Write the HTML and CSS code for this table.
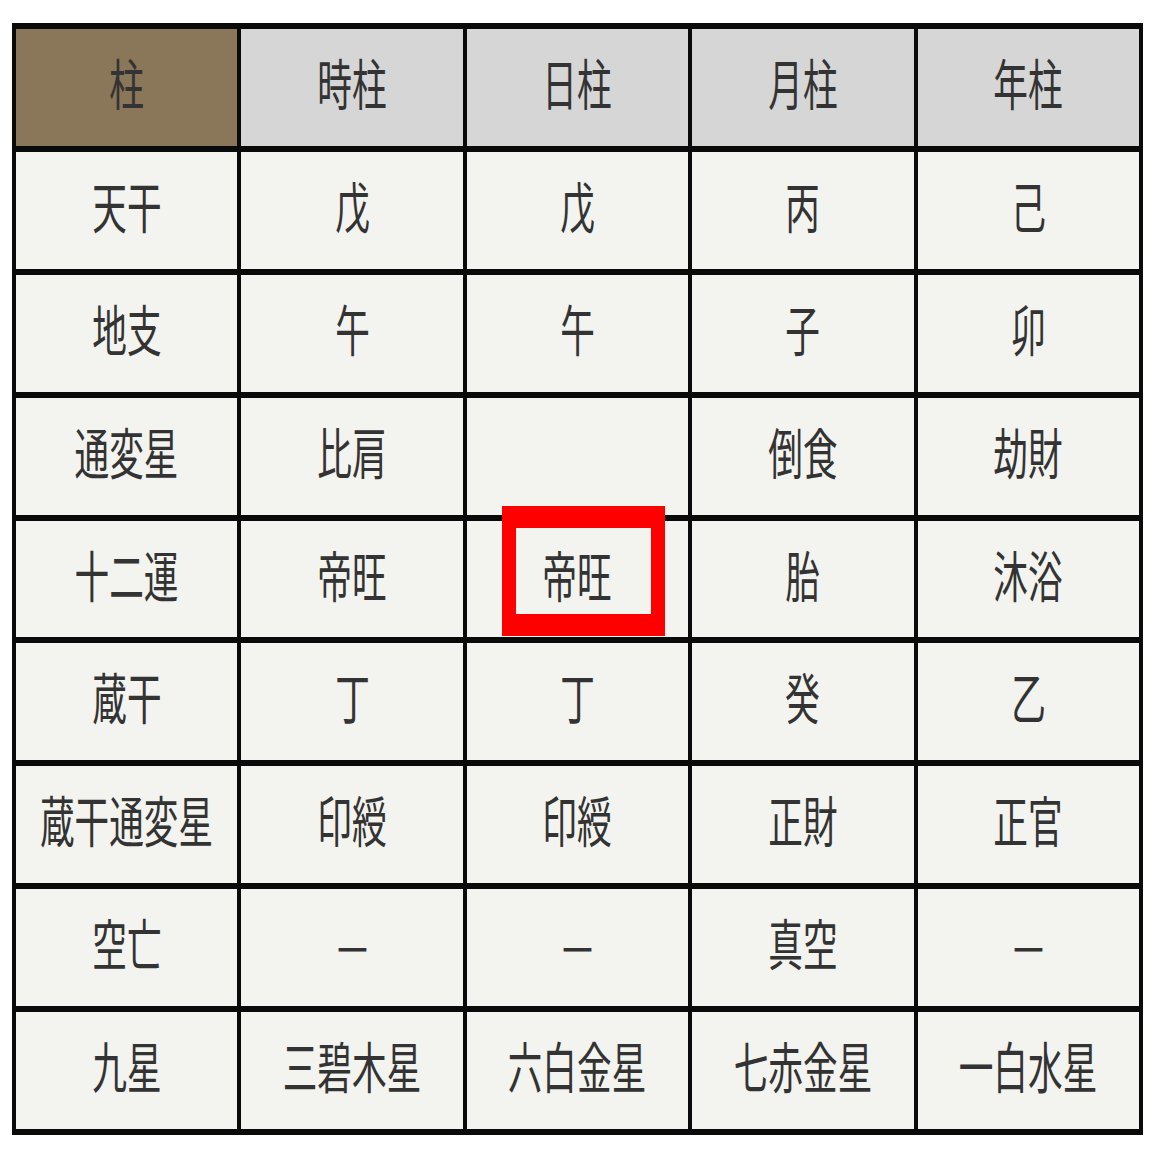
FILE: index.html
```html
<!DOCTYPE html>
<html lang="ja">
<head>
<meta charset="utf-8">
<title>命式</title>
<link rel="stylesheet" href="styles.css">
</head>
<body>
<div class="chart">
  <div class="cell head head-main"><span class="t">柱</span></div>
  <div class="cell head"><span class="t">時柱</span></div>
  <div class="cell head"><span class="t">日柱</span></div>
  <div class="cell head"><span class="t">月柱</span></div>
  <div class="cell head"><span class="t">年柱</span></div>

  <div class="cell"><span class="t">天干</span></div>
  <div class="cell"><span class="t">戊</span></div>
  <div class="cell"><span class="t">戊</span></div>
  <div class="cell"><span class="t">丙</span></div>
  <div class="cell"><span class="t">己</span></div>

  <div class="cell"><span class="t">地支</span></div>
  <div class="cell"><span class="t">午</span></div>
  <div class="cell"><span class="t">午</span></div>
  <div class="cell"><span class="t">子</span></div>
  <div class="cell"><span class="t">卯</span></div>

  <div class="cell"><span class="t">通変星</span></div>
  <div class="cell"><span class="t">比肩</span></div>
  <div class="cell"></div>
  <div class="cell"><span class="t">倒食</span></div>
  <div class="cell"><span class="t">劫財</span></div>

  <div class="cell"><span class="t">十二運</span></div>
  <div class="cell"><span class="t">帝旺</span></div>
  <div class="cell"><span class="t">帝旺</span></div>
  <div class="cell"><span class="t">胎</span></div>
  <div class="cell"><span class="t">沐浴</span></div>

  <div class="cell"><span class="t">蔵干</span></div>
  <div class="cell"><span class="t">丁</span></div>
  <div class="cell"><span class="t">丁</span></div>
  <div class="cell"><span class="t">癸</span></div>
  <div class="cell"><span class="t">乙</span></div>

  <div class="cell"><span class="t">蔵干通変星</span></div>
  <div class="cell"><span class="t">印綬</span></div>
  <div class="cell"><span class="t">印綬</span></div>
  <div class="cell"><span class="t">正財</span></div>
  <div class="cell"><span class="t">正官</span></div>

  <div class="cell"><span class="t">空亡</span></div>
  <div class="cell"><span class="t">—</span></div>
  <div class="cell"><span class="t">—</span></div>
  <div class="cell"><span class="t">真空</span></div>
  <div class="cell"><span class="t">—</span></div>

  <div class="cell"><span class="t">九星</span></div>
  <div class="cell"><span class="t">三碧木星</span></div>
  <div class="cell"><span class="t">六白金星</span></div>
  <div class="cell"><span class="t">七赤金星</span></div>
  <div class="cell"><span class="t">一白水星</span></div>

  <div class="highlight"></div>
</div>
</body>
</html>
```

FILE: styles.css
```css
html, body {
  margin: 0;
  padding: 0;
  background: #ffffff;
}

body {
  padding: 23px 0 0 12px;
  font-family: "Noto Sans CJK JP", "Noto Sans CJK SC", sans-serif;
}

.chart {
  position: relative;
  width: 1131px;
  box-sizing: border-box;
  display: grid;
  grid-template-columns: repeat(5, 1fr);
  grid-template-rows: repeat(9, 116.9px);
  column-gap: 4px;
  row-gap: 6px;
  padding: 6px 4px;
  background: #0a0a0a;
}

.cell {
  background: #f3f3ef;
  display: flex;
  align-items: center;
  justify-content: center;
  color: #333333;
  font-size: 55px;
  line-height: 1;
  overflow: hidden;
  box-sizing: border-box;
  padding-bottom: 12px;
}

.cell .t {
  display: inline-block;
  transform: scaleX(0.63);
  white-space: nowrap;
  letter-spacing: 0;
}

.head {
  background: #d6d6d6;
}

.head-main {
  background: #8a7658;
}

.highlight {
  position: absolute;
  left: 490px;
  top: 483px;
  width: 163px;
  height: 130px;
  box-sizing: border-box;
  border-style: solid;
  border-color: #ff0000;
  border-width: 22px 14px;
}
```
